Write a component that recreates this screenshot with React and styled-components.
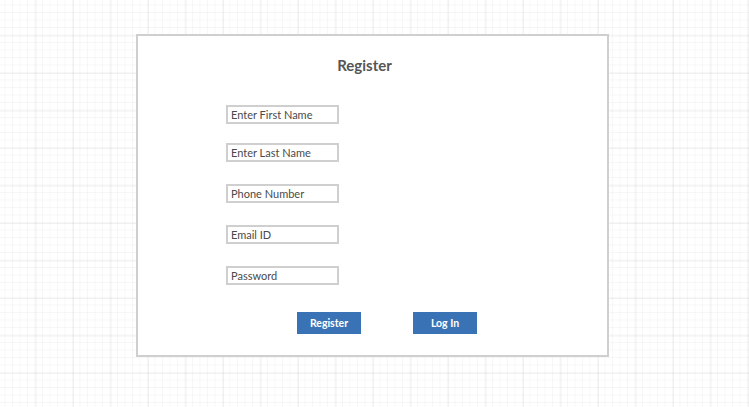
import React from "react";
import styled, { createGlobalStyle } from "styled-components";

const Global = createGlobalStyle`
  html, body { margin: 0; padding: 0; }
  body {
    width: 749px;
    height: 407px;
    overflow: hidden;
    font-family: Lato, "Liberation Sans", sans-serif;
    background-color: #ffffff;
    background-image:
      linear-gradient(to right, rgba(0,0,0,0.055) 1px, transparent 1px),
      linear-gradient(to bottom, rgba(0,0,0,0.055) 1px, transparent 1px),
      linear-gradient(to right, rgba(0,0,0,0.03) 1px, transparent 1px),
      linear-gradient(to bottom, rgba(0,0,0,0.03) 1px, transparent 1px);
    background-size: 37.5px 37.5px, 37.5px 37.5px, 7.5px 7.5px, 7.5px 7.5px;
    background-position: -2px -2px, -2px -2px, -3px -3px, -3px -3px;
  }
`;

const Page = styled.div`
  padding: 34px 0 0 136px;
`;

const Card = styled.div`
  width: 469px;
  height: 319px;
  border: 2px solid #cfcfcf;
  background: #fff;
  display: flex;
  flex-direction: column;
`;

const Title = styled.h1`
  margin: 19px 16px 0 0;
  text-align: center;
  font-size: 15px;
  font-weight: 700;
  color: #555;
  line-height: 20px;
`;

const Fields = styled.div`
  display: flex;
  flex-direction: column;
  align-items: flex-start;
  padding-left: 88px;
  margin-top: 30px;
`;

const Field = styled.div`
  width: 106px;
  height: 15px;
  border: 2px solid #cfcfcf;
  margin-top: ${(p) => p.$gap}px;
  padding: 0 0 0 3px;
  font-size: 11px;
  line-height: 15px;
  color: #4a4a4a;
  white-space: nowrap;
  overflow: hidden;
`;

const Buttons = styled.div`
  display: flex;
  gap: 52px;
  padding-left: 159px;
  margin-top: 27px;
`;

const Button = styled.div`
  width: 64px;
  height: 22px;
  background: #3a72b6;
  color: #fff;
  font-size: 10.5px;
  font-weight: 700;
  display: flex;
  align-items: center;
  justify-content: center;
`;

const fields = [
  ["Enter First Name", 0],
  ["Enter Last Name", 19],
  ["Phone Number", 22],
  ["Email ID", 22],
  ["Password", 22],
];

export default function App() {
  return (
    <>
      <Global />
      <Page>
        <Card>
          <Title>Register</Title>
          <Fields>
            {fields.map(([t, g]) => (
              <Field key={t} $gap={g}>{t}</Field>
            ))}
          </Fields>
          <Buttons>
            <Button>Register</Button>
            <Button>Log In</Button>
          </Buttons>
        </Card>
      </Page>
    </>
  );
}
